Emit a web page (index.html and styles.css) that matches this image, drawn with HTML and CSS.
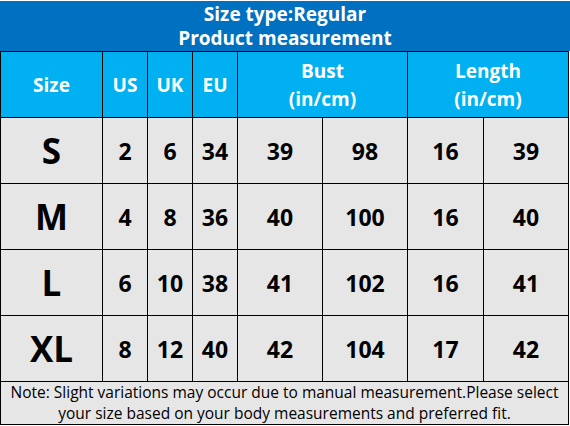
FILE: index.html
```html
<!DOCTYPE html>
<html>
  <head>
    <title>Size chart</title>
    <meta charset="UTF-8">
    <link rel="stylesheet" href="styles.css">
  </head>
  <body>

<!-- SIZE CHART -->
<div class="sheet">
<div class="title">Size type:Regular<br>Product measurement</div>
<table class="chart">
<colgroup>
<col class="cSize"><col class="cNum"><col class="cNum"><col class="cNum">
<col class="cBust"><col class="cBust"><col class="cLenA"><col class="cLenB">
</colgroup>
<tr class="head">
<td>Size</td><td>US</td><td>UK</td><td>EU</td>
<td colspan="2">Bust<br>(in/cm)</td>
<td colspan="2">Length<br>(in/cm)</td>
</tr>
<tr class="row">
<td class="size">S</td><td>2</td><td>6</td><td>34</td><td>39</td><td>98</td><td>16</td><td>39</td>
</tr>
<tr class="row">
<td class="size">M</td><td>4</td><td>8</td><td>36</td><td>40</td><td>100</td><td>16</td><td>40</td>
</tr>
<tr class="row">
<td class="size">L</td><td>6</td><td>10</td><td>38</td><td>41</td><td>102</td><td>16</td><td>41</td>
</tr>
<tr class="row">
<td class="size">XL</td><td>8</td><td>12</td><td>40</td><td>42</td><td>104</td><td>17</td><td>42</td>
</tr>
<tr class="note">
<td colspan="8">Note: Slight variations may occur due to manual measurement.Please select<br>your size based on your body measurements and preferred fit.</td>
</tr>
</table>
</div>

  </body>
</html>
```

FILE: styles.css
```css
body{
margin: 0;
background-color: white;
font-family: "Open Sans", "Noto Sans", sans-serif;
}

.sheet{
width: 570px;
padding-top: 1px;
}

.title{
height: 50px;
background-color: #0070c0;
color: white;
font-size: 19px;
font-weight: bold;
line-height: 24px;
text-align: center;
padding-top: 1px;
box-sizing: border-box;
}

.chart{
border-collapse: collapse;
table-layout: fixed;
width: 569px;
}

.chart td{
border: 1px solid black;
text-align: center;
padding: 0;
}

.cSize{ width: 102px; }
.cNum{ width: 45px; }
.cBust{ width: 85px; }
.cLenA{ width: 76px; }
.cLenB{ width: 85px; }

.head td{
height: 65px;
background-color: #00b0f0;
color: white;
font-size: 19px;
font-weight: bold;
line-height: 28px;
}

.row td{
height: 65px;
background-color: #e7e6e6;
color: black;
font-size: 23px;
font-weight: bold;
}

.row .size{
font-size: 35px;
}

.note td{
height: 41px;
background-color: #e7e6e6;
color: black;
font-size: 15.5px;
line-height: 21px;
white-space: nowrap;
}
```
